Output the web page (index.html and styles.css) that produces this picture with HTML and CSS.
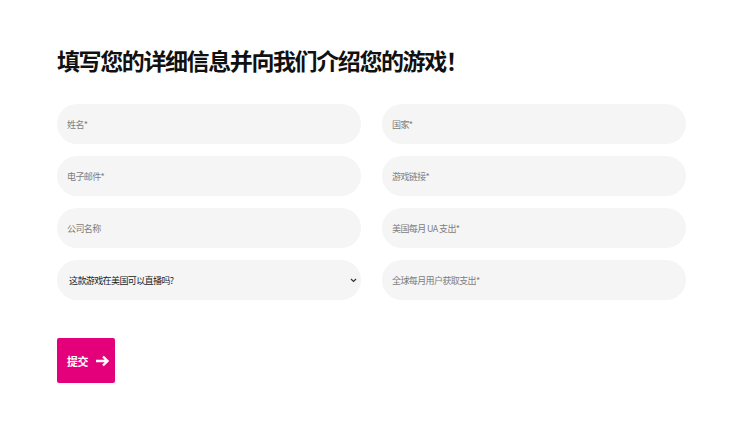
FILE: index.html
```html
<!DOCTYPE html>
<html lang="zh">
<head>
<meta charset="utf-8">
<link rel="stylesheet" href="styles.css">
</head>
<body>
<main class="page">
  <h1 class="title">填写您的详细信息并向我们介绍您的游戏！</h1>
  <form class="form">
    <div class="grid">
      <input class="field" type="text" placeholder="姓名*">
      <input class="field" type="text" placeholder="国家*">
      <input class="field" type="email" placeholder="电子邮件*">
      <input class="field" type="text" placeholder="游戏链接*">
      <input class="field" type="text" placeholder="公司名称">
      <input class="field" type="text" placeholder="美国每月 UA 支出*">
      <div class="field select">
        <span class="select-text">这款游戏在美国可以直播吗?</span>
        <svg class="chev" width="7" height="5" viewBox="0 0 7 5"><path d="M1 1l2.5 2.5L6 1" fill="none" stroke="#333" stroke-width="1.2"/></svg>
      </div>
      <input class="field" type="text" placeholder="全球每月用户获取支出*">
    </div>
    <button class="submit" type="button">
      <span>提交</span>
      <svg width="15" height="12" viewBox="0 0 15 12"><path d="M1 6h11M8 1.5L12.5 6 8 10.5" fill="none" stroke="#fff" stroke-width="2.4"/></svg>
    </button>
  </form>
</main>
</body>
</html>
```
FILE: styles.css
```css
* { box-sizing: border-box; }
html, body { margin: 0; padding: 0; background: #fff; }
body { font-family: "Noto Sans CJK SC", "Noto Sans", sans-serif; }
.page { padding: 45px 44px 0 57px; }
.title {
  margin: 0;
  font-size: 23px;
  line-height: 30px;
  font-weight: 700;
  color: #111;
  letter-spacing: -1.4px;
}
.form { margin-top: 29px; }
.grid {
  display: grid;
  grid-template-columns: 304px 304px;
  column-gap: 21px;
  row-gap: 12px;
}
.field {
  height: 40px;
  border: none;
  border-radius: 20px;
  background: #f5f5f5;
  padding: 0 10px;
  font-family: inherit;
  font-size: 9px;
  letter-spacing: -0.6px;
  color: #333;
  outline: none;
}
.field::placeholder { color: #7d7d7d; }
.select {
  display: flex;
  align-items: center;
  justify-content: space-between;
  padding: 0 4px 0 12px;
}
.select-text { color: #1a1a1a; font-size: 9px; }
.chev { display: block; }
.submit {
  margin-top: 38px;
  width: 58px;
  height: 45px;
  border: none;
  border-radius: 2px;
  background: #e4007b;
  color: #fff;
  font-family: inherit;
  font-size: 11px;
  font-weight: 700;
  letter-spacing: -0.5px;
  display: flex;
  align-items: center;
  gap: 7px;
  padding: 0 0 0 10px;
}
.submit svg { display: block; }
```
